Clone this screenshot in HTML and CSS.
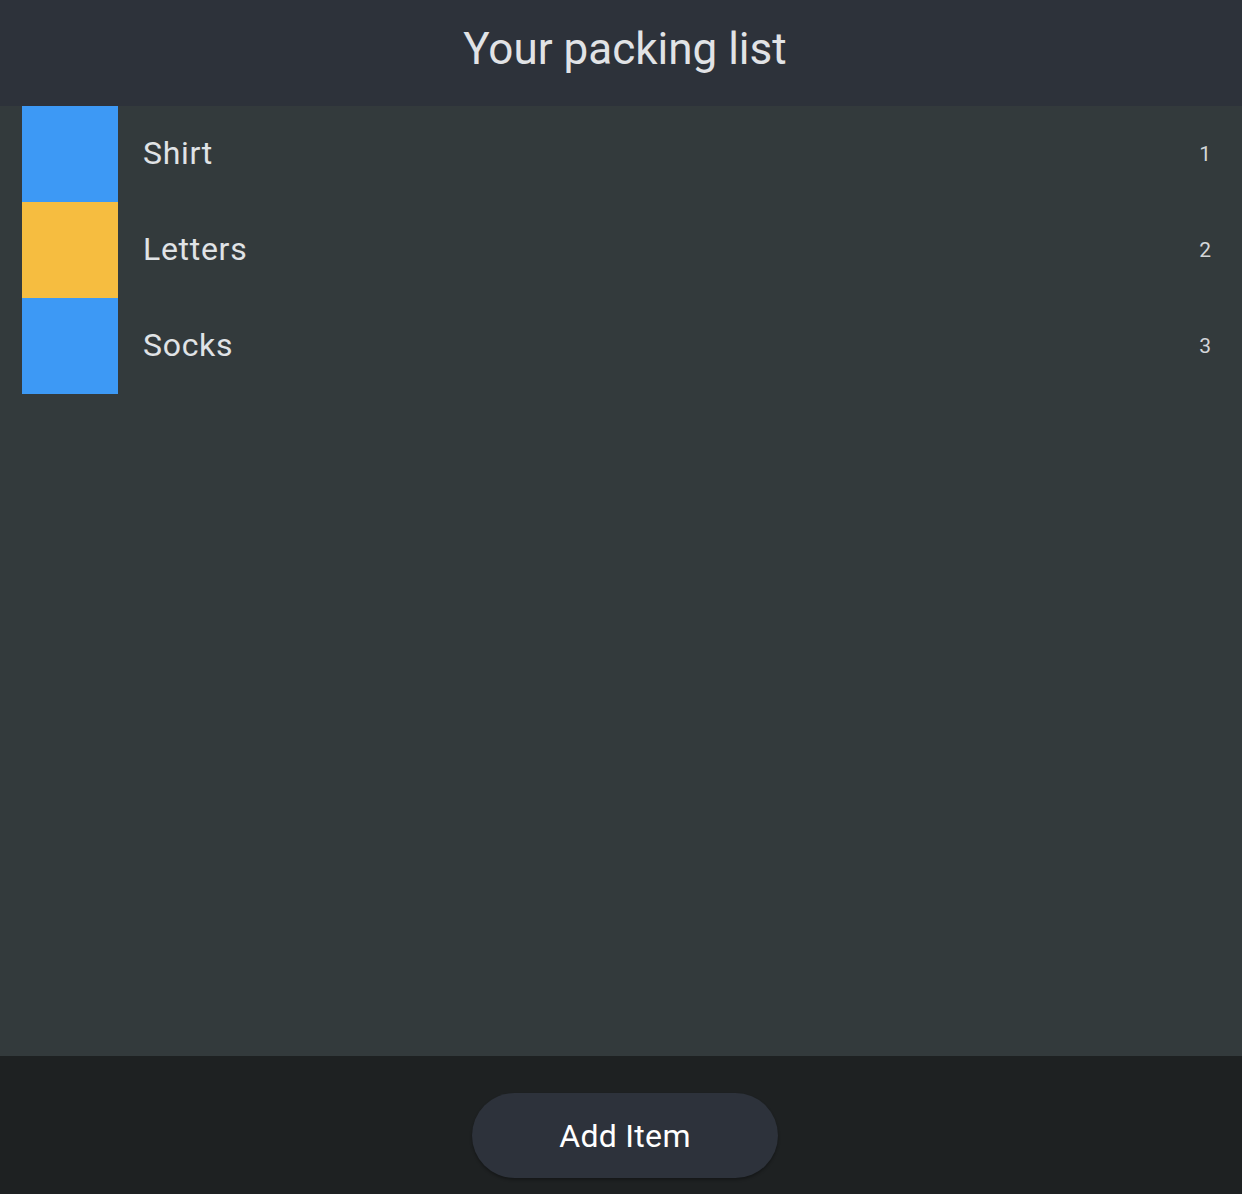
FILE: index.html
```html
<!DOCTYPE html>
<html>
<head>
<meta charset="utf-8">
<link rel="stylesheet" href="styles.css">
</head>
<body>
<div class="app">
  <header class="header"><h1 class="title">Your packing list</h1></header>
  <main class="list">
    <div class="row"><div class="swatch blue"></div><div class="name">Shirt</div><div class="num">1</div></div>
    <div class="row"><div class="swatch yellow"></div><div class="name">Letters</div><div class="num">2</div></div>
    <div class="row"><div class="swatch blue"></div><div class="name">Socks</div><div class="num">3</div></div>
  </main>
  <footer class="footer"><button class="add">Add Item</button></footer>
</div>
</body>
</html>
```

FILE: styles.css
```css
html, body { margin: 0; padding: 0; }
body { font-family: Roboto, "Noto Sans", sans-serif; background: #333a3c; }
.app { display: flex; flex-direction: column; height: 1194px; width: 1242px; }
.header { height: 106px; background: #2d323a; display: flex; align-items: center; justify-content: center; padding-left: 8px; box-sizing: border-box; }
.title { margin: 0; font-weight: 400; font-size: 44px; color: #e1e3e6; padding-bottom: 8px; }
.list { flex: 1; background: #333a3c; padding: 0 31px 0 22px; }
.row { display: flex; align-items: center; height: 96px; }
.swatch { width: 96px; height: 96px; flex: none; }
.blue { background: #3d99f5; }
.yellow { background: #f6bd40; }
.name { flex: 1; margin-left: 25px; font-size: 32px; color: #e0e3e6; letter-spacing: 0.7px; padding-bottom: 2px; }
.num { font-size: 21px; color: #d3d6d9; }
.footer { height: 138px; background: #1e2122; display: flex; align-items: flex-start; justify-content: center; padding: 37px 0 0 8px; box-sizing: border-box; }
.add { width: 306px; height: 85px; border: none; border-radius: 43px; background: #2d323b; color: #ffffff; font-family: Roboto, "Noto Sans", sans-serif; font-size: 32px; letter-spacing: 0.3px; box-shadow: 0 2px 3px rgba(0,0,0,0.3); }
```
